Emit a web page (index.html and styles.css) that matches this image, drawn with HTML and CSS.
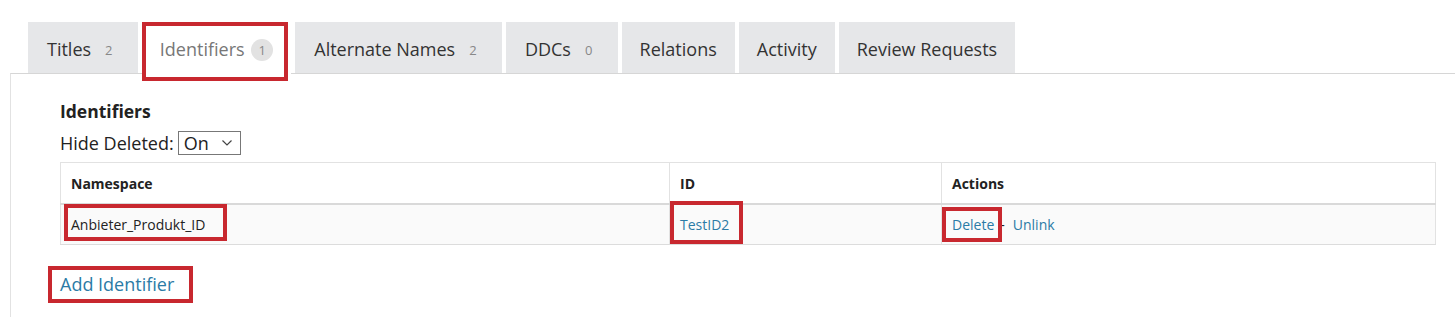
FILE: index.html
```html
<!DOCTYPE html>
<html lang="en">
<head>
    <meta charset="UTF-8">
    <meta name="viewport" content="width=device-width, initial-scale=1.0">
    <title>Identifiers</title>
    <link rel="stylesheet" href="styles.css">
</head>
<body>
    <ul class="tabs">
        <li class="tab">Titles <span class="count">2</span></li>
        <li class="tab active mark mark-tab">Identifiers <span class="count">1</span></li>
        <li class="tab">Alternate Names <span class="count">2</span></li>
        <li class="tab">DDCs <span class="count">0</span></li>
        <li class="tab">Relations</li>
        <li class="tab">Activity</li>
        <li class="tab">Review Requests</li>
    </ul>

    <div class="panel">
        <h3>Identifiers</h3>
        <div class="filter">
            <label>Hide Deleted:</label>
            <span class="select">On
                <svg width="12" height="8" viewBox="0 0 12 8"><path d="M1.5 1.5 L6 6 L10.5 1.5" fill="none" stroke="#444" stroke-width="1.2"/></svg>
            </span>
        </div>

        <table class="grid">
            <thead>
                <tr>
                    <th class="col-ns">Namespace</th>
                    <th class="col-id">ID</th>
                    <th>Actions</th>
                </tr>
            </thead>
            <tbody>
                <tr>
                    <td><span class="mark mark-ns">Anbieter_Produkt_ID</span></td>
                    <td><a href="#" class="mark mark-id">TestID2</a></td>
                    <td><a href="#" class="mark mark-del">Delete</a><span class="sep">-</span><a href="#">Unlink</a></td>
                </tr>
            </tbody>
        </table>

        <a href="#" class="add mark mark-add">Add Identifier</a>
    </div>
</body>
</html>
```

FILE: styles.css
```css
body {
    font-family: "Open Sans", "Liberation Sans", sans-serif;
    color: #222;
    background-color: #fff;
    margin: 0;
    padding: 22px 0 0 0;
}

a {
    color: #2b7ba6;
    text-decoration: none;
}

.tabs {
    list-style: none;
    display: flex;
    gap: 4px;
    margin: 0 0 0 28px;
    padding: 0;
    position: relative;
    z-index: 1;
}

.tab {
    background-color: #e6e7e9;
    color: #333;
    font-size: 18px;
    height: 47px;
    line-height: 47px;
    padding: 4px 18px 0 19px;
}

.tab:nth-child(n+5) {
    padding: 4px 18px 0 18px;
}

.tab.active {
    background-color: #fff;
    color: #777;
    height: 48px;
    margin-bottom: -1px;
    padding: 4px 18px 0 18px;
}

.count {
    display: inline-block;
    min-width: 22px;
    height: 22px;
    line-height: 22px;
    border-radius: 11px;
    margin-left: 2px;
    text-align: center;
    font-size: 13px;
    color: #888;
    vertical-align: 1px;
}

.tab.active .count {
    background-color: #e2e2e2;
}

.panel {
    margin-left: 10px;
    border-top: 1px solid #d6d6d6;
    border-left: 1px solid #e2e2e2;
    padding: 25px 19px 20px 49px;
}

h3 {
    font-size: 17.5px;
    font-weight: bold;
    line-height: 24px;
    margin: 0 0 8px 0;
}

.filter {
    display: flex;
    align-items: center;
    gap: 4px;
    font-size: 18px;
    height: 24px;
    margin-bottom: 7px;
}

.select {
    display: inline-flex;
    align-items: center;
    gap: 12px;
    height: 22px;
    padding: 0 7px 0 5px;
    border: 1px solid #777;
    line-height: 22px;
}

.grid {
    width: 1376px;
    border-collapse: collapse;
    font-size: 14px;
}

.grid th,
.grid td {
    text-align: left;
    padding: 0 10px;
    border-left: 1px solid #e2e2e2;
    border-right: 1px solid #e2e2e2;
}

.grid th {
    height: 40px;
    padding-top: 0;
    border-top: 1px solid #e2e2e2;
    border-bottom: 2px solid #d9d9d9;
}

.grid td {
    height: 39px;
    background-color: #fafafa;
    border-bottom: 1px solid #dcdcdc;
}

.col-ns {
    width: 588px;
}

.col-id {
    width: 251px;
}

.sep {
    margin: 0 8px 0 6px;
}

.add {
    display: inline-block;
    font-size: 18px;
    line-height: 26px;
    margin-top: 26px;
}

/* red highlight boxes drawn over the screenshot */
.mark {
    position: relative;
}

.mark::after {
    content: "";
    position: absolute;
    border: 4px solid #c8282f;
    pointer-events: none;
}

.mark-tab::after {
    top: 0;
    left: 0;
    right: 3px;
    bottom: -7px;
}

.mark-ns::after {
    top: -11px;
    left: -7px;
    right: -22px;
    bottom: -7px;
}

.mark-id::after {
    top: -14px;
    left: -10px;
    right: -14px;
    bottom: -10px;
}

.mark-del::after {
    top: -8px;
    left: -10px;
    right: -8px;
    bottom: -8px;
}

.mark-add::after {
    top: -5px;
    left: -12px;
    right: -19px;
    bottom: -6px;
}
```
